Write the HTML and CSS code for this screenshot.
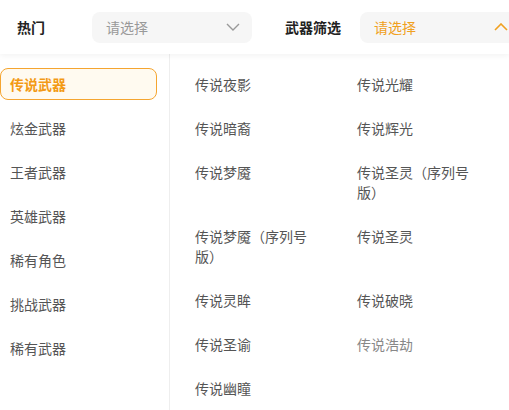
FILE: index.html
```html
<!doctype html>
<html>
<head>
<meta charset='UTF-8'>
<meta name='viewport' content='width=device-width, initial-scale=1'>
<title>武器筛选</title>
<link rel="stylesheet" href="styles.css">
</head>
<body>
<div class='filter-bar'>
<div class='filter-group'>
<span class='filter-label'>热门</span>
<div class='picker'><span>请选择</span>
<svg width='14' height='8' viewBox='0 0 14 8'><path d='M1 1 L7 7 L13 1' fill='none' stroke='#999' stroke-width='1.4'/></svg>
</div>
</div>
<div class='filter-group'>
<span class='filter-label'>武器筛选</span>
<div class='picker open'><span>请选择</span>
<svg width='14' height='8' viewBox='0 0 14 8'><path d='M1 7 L7 1 L13 7' fill='none' stroke='#f0a020' stroke-width='1.6'/></svg>
</div>
</div>
</div>
<div class='panel'>
<div class='category-list'>
<div class='category active'>传说武器</div>
<div class='category'>炫金武器</div>
<div class='category'>王者武器</div>
<div class='category'>英雄武器</div>
<div class='category'>稀有角色</div>
<div class='category'>挑战武器</div>
<div class='category'>稀有武器</div>
</div>
<div class='item-grid'>
<div class='item'>传说夜影</div>
<div class='item'>传说光耀</div>
<div class='item'>传说暗裔</div>
<div class='item'>传说辉光</div>
<div class='item'>传说梦魇</div>
<div class='item'>传说圣灵（序列号版）</div>
<div class='item'>传说梦魇（序列号版）</div>
<div class='item'>传说圣灵</div>
<div class='item'>传说灵眸</div>
<div class='item'>传说破晓</div>
<div class='item'>传说圣谕</div>
<div class='item faded'>传说浩劫</div>
<div class='item'>传说幽瞳</div>
</div>
</div>
</body>
</html>
```
FILE: styles.css
```css
body
{
margin: 0;
font-family: "Noto Sans CJK SC", "Noto Sans", sans-serif;
font-size: 14px;
background-color: white;
color: #333;
overflow: hidden;
}

.filter-bar
{
display: flex;
height: 54px;
align-items: center;
box-shadow: 0 2px 6px rgba(0, 0, 0, 0.05);
position: relative;
overflow: hidden;
}

.filter-group
{
display: flex;
align-items: center;
flex-shrink: 0;
}

.filter-label
{
font-weight: bold;
color: #222;
width: 75px;
padding-left: 17px;
}

.filter-group + .filter-group .filter-label
{
width: 75px;
padding-left: 33px;
}

.picker
{
display: flex;
align-items: center;
justify-content: space-between;
width: 160px;
height: 31px;
box-sizing: border-box;
padding: 0 12px 0 14px;
border-radius: 8px;
background-color: #f6f6f6;
color: #999;
}

.picker.open
{
color: #f0a020;
}

.panel
{
display: flex;
height: 356px;
}

.category-list
{
width: 169px;
border-right: 1px solid #eee;
padding-top: 14px;
display: flex;
flex-direction: column;
gap: 12px;
}

.category
{
width: 157px;
height: 32px;
line-height: 30px;
box-sizing: border-box;
border: 1px solid transparent;
border-radius: 8px;
padding-left: 9px;
color: #555;
}

.category.active
{
border-color: #f5a530;
background-color: #fffaf0;
color: #f39a16;
font-weight: bold;
}

.item-grid
{
display: grid;
grid-template-columns: 125px 125px;
column-gap: 37px;
align-content: start;
padding: 8px 0 0 25px;
}

.item
{
padding: 12px 0;
line-height: 20px;
color: #555;
}

.item.faded
{
color: #888;
}
```
